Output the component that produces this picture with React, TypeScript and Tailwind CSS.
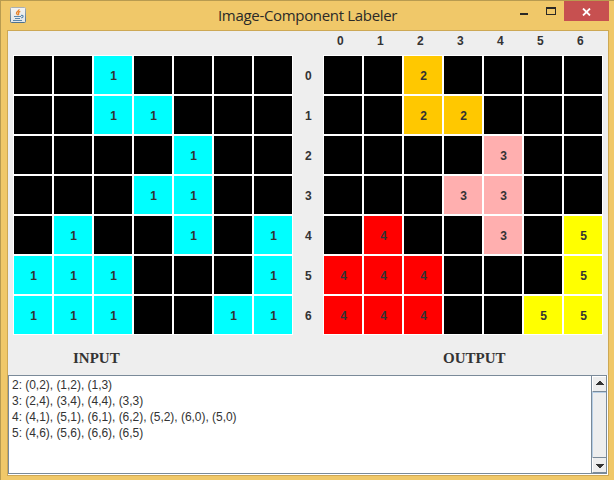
import React from 'react';

const COLORS: Record<string, string> = {
  '0': 'bg-black',
  '1': 'bg-[#00ffff]',
  '2': 'bg-[#ffc800]',
  '3': 'bg-[#ffafaf]',
  '4': 'bg-[#ff0000]',
  '5': 'bg-[#ffff00]',
};

const INPUT = ['0010000', '0011000', '0000100', '0001100', '0100101', '1110001', '1110011'];
const OUTPUT = ['0020000', '0022000', '0000300', '0003300', '0400305', '4440005', '4440055'];
const INDEX = [0, 1, 2, 3, 4, 5, 6];

const COMPONENTS = [
  '2: (0,2), (1,2), (1,3)',
  '3: (2,4), (3,4), (4,4), (3,3)',
  '4: (4,1), (5,1), (6,1), (6,2), (5,2), (6,0), (5,0)',
  '5: (4,6), (5,6), (6,6), (6,5)',
];

function Grid({ rows }: { rows: string[] }) {
  return (
    <div className="grid h-[280px] w-[280px] grid-cols-7">
      {rows.flatMap((row, r) =>
        row.split('').map((v, c) => (
          <div
            key={`${r}-${c}`}
            className={`flex h-10 w-10 items-center justify-center border border-white pt-px pl-px ${COLORS[v]}`}
          >
            {v !== '0' && v}
          </div>
        )),
      )}
    </div>
  );
}

function JavaIcon() {
  return (
    <svg width="16" height="16" viewBox="0 0 16 16">
      <defs>
        <linearGradient id="tile" x1="0" y1="0" x2="0" y2="1">
          <stop offset="0" stopColor="#f4f4f2" />
          <stop offset="1" stopColor="#e2e5e7" />
        </linearGradient>
        <linearGradient id="edge" x1="0" y1="0" x2="0" y2="1">
          <stop offset="0" stopColor="#a9b0b5" />
          <stop offset="1" stopColor="#4d7290" />
        </linearGradient>
      </defs>
      <rect x="0.5" y="0.5" width="15" height="15" rx="1" fill="url(#tile)" stroke="url(#edge)" />
      <path d="M9 2.2c.5 1.6-2.8 2.4-2.5 4 .1.8 1 1.2 1.1 2M10.3 4.3c-1.6.6-2.3 1.3-1.7 2.1.4.7.2 1.1-.4 1.7" fill="none" stroke="#e8842c" strokeWidth="1.3" />
      <path d="M4 9.5h7M5 11.5h5M11 8.5c2.8-.6 2.8 1.9.2 2.4M3 13.5h9" fill="none" stroke="#5b87ac" strokeWidth="1.1" />
    </svg>
  );
}

function Arrow({ down = false }: { down?: boolean }) {
  return (
    <svg width="8" height="4" viewBox="0 0 8 4" shapeRendering="crispEdges">
      <path d={down ? 'M0 0h8v1H7v1H6v1H5v1H3V3H2V2H1V1H0z' : 'M3 0h2v1h1v1h1v1h1v1H0V3h1V2h1V1h1z'} fill="#333" />
    </svg>
  );
}

export default function App() {
  return (
    <div className="flex h-[480px] w-[614px] flex-col overflow-hidden border-t border-l border-[#b89b50] bg-[#f0c869] font-['Liberation_Sans',Arial,sans-serif] text-[#333]">
      <header className="flex h-[29px] shrink-0 items-start pl-[9px]">
        <div className="mt-[6px] w-4">
          <JavaIcon />
        </div>
        <h1 className="w-[179px] ml-[192px] mt-[4px] whitespace-nowrap font-['Open_Sans','Noto_Sans',sans-serif] text-[15px] leading-[21px] tracking-[-0.32px] text-[#2b2a28]">
          Image-Component Labeler
        </h1>
        <div className="ml-auto flex h-5 w-[100px]">
          <div className="flex w-[50px] pl-[6px] pt-[6px]">
            <svg width="40" height="9" viewBox="0 0 40 9" shapeRendering="crispEdges">
              <path d="M0 6h8v2H0z" fill="#2a2926" />
              <path d="M26 0h10v8H26zM27 2v5h8V2z" fill="#2a2926" fillRule="evenodd" />
            </svg>
          </div>
          <div className="flex h-5 w-[45px] items-center justify-center bg-[#c75050] pt-px">
            <svg width="9" height="8" viewBox="0 0 9 8">
              <path d="M1 .5l7 7M8 .5l-7 7" stroke="white" strokeWidth="1.8" />
            </svg>
          </div>
        </div>
      </header>
      <main className="ml-[6px] flex h-[446px] w-[602px] shrink-0 flex-col border border-[#cda854] bg-[#eee] text-[12px] leading-4 font-bold">
        <div className="flex h-[24px] pl-[315px] pt-[2px]">
          {INDEX.map((i) => (
            <span key={i} className="w-10 pl-[14px]">{i}</span>
          ))}
        </div>
        <div className="flex pl-[5px]">
          <Grid rows={INPUT} />
          <div className="w-[30px]">
            {INDEX.map((i) => (
              <div key={i} className="flex h-10 items-center pl-3 pt-px">{i}</div>
            ))}
          </div>
          <Grid rows={OUTPUT} />
        </div>
        <div className="flex h-10 pt-[13px] font-['Liberation_Serif','Times_New_Roman',serif] text-[15px] leading-[20px]">
          <span className="w-[370px] pl-[65px]">INPUT</span>
          <span className="pl-[65px]">OUTPUT</span>
        </div>
        <div className="flex h-[100px] border-r border-b border-white">
          <div className="flex h-[99px] w-[599px] border border-[#7a8a99] bg-white">
            <div className="flex-1 pl-[3px] pt-[1px] font-normal tracking-[-0.03px]">
              {COMPONENTS.map((line) => (
                <div key={line} className="h-4 whitespace-pre">{line}</div>
              ))}
            </div>
            <div className="flex w-[15px] flex-col border-l border-[#7a8a99] bg-[#eee]">
              <div className="flex h-[16px] items-start justify-center border-t border-b border-l border-t-white border-b-[#7a8a99] border-l-white pt-[4px]">
                <Arrow />
              </div>
              <div className="flex-1 border-t border-l border-[#b8cfe5]" />
              <div className="flex h-[16px] items-start justify-center border-t border-b border-l border-t-[#7a8a99] border-b-[#7a8a99] border-l-white pt-[6px]">
                <Arrow down />
              </div>
            </div>
          </div>
        </div>
      </main>
    </div>
  );
}
